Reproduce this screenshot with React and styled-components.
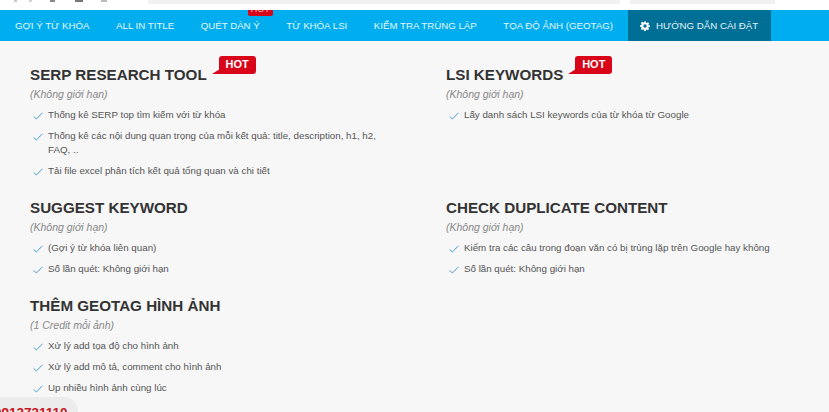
import styled, { createGlobalStyle } from 'styled-components';

const GlobalStyle = createGlobalStyle`
  html, body {
    margin: 0;
    height: 412px;
    overflow: hidden;
    background: #f7f7f7;
    font-family: "Liberation Sans", Arial, sans-serif;
  }
`;

const navItems = [
  { label: 'GỢI Ý TỪ KHÓA' },
  { label: 'ALL IN TITLE' },
  { label: 'QUÉT DÀN Ý', hot: true },
  { label: 'TỪ KHÓA LSI' },
  { label: 'KIỂM TRA TRÙNG LẶP' },
  { label: 'TỌA ĐỘ ẢNH (GEOTAG)' },
];

const stripMarks = [
  { width: 3, gap: 12, color: '#c8c8c8' },
  { width: 3, gap: 18, color: '#d4d4d4' },
  { width: 5, gap: 20, color: '#8a8a8a' },
  { width: 8, gap: 18, color: '#777' },
  { width: 6, gap: 0, color: '#bbb' },
];

const leftColumn = [
  {
    title: 'SERP RESEARCH TOOL',
    hot: true,
    note: '(Không giới hạn)',
    items: [
      'Thống kê SERP top tìm kiếm với từ khóa',
      'Thống kê các nội dung quan trọng của mỗi kết quả: title, description, h1, h2, FAQ, ..',
      'Tải file excel phân tích kết quả tổng quan và chi tiết',
    ],
  },
  {
    title: 'SUGGEST KEYWORD',
    note: '(Không giới hạn)',
    items: ['(Gợi ý từ khóa liên quan)', 'Số lần quét: Không giới hạn'],
  },
  {
    title: 'THÊM GEOTAG HÌNH ẢNH',
    note: '(1 Credit mỗi ảnh)',
    items: ['Xử lý add tọa độ cho hình ảnh', 'Xử lý add mô tả, comment cho hình ảnh', 'Up nhiều hình ảnh cùng lúc'],
  },
];

const rightColumn = [
  {
    title: 'LSI KEYWORDS',
    hot: true,
    note: '(Không giới hạn)',
    items: ['Lấy danh sách LSI keywords của từ khóa từ Google'],
    minHeight: 112,
  },
  {
    title: 'CHECK DUPLICATE CONTENT',
    note: '(Không giới hạn)',
    items: ['Kiểm tra các câu trong đoạn văn có bị trùng lặp trên Google hay không', 'Số lần quét: Không giới hạn'],
  },
];

const CheckIcon = () => (
  <CheckSvg viewBox="0 0 10 8" aria-hidden="true">
    <path d="M0.6 4.4 L3.4 7 L9.4 0.8" fill="none" stroke="#4a9fd4" strokeWidth="1" />
  </CheckSvg>
);

const GearIcon = () => (
  <GearSvg viewBox="0 0 24 24" aria-hidden="true">
    <path
      fillRule="evenodd"
      fill="#fff"
      d="M10 1h4l.6 3.2 1.9.8 2.7-1.8 2.8 2.8-1.8 2.7.8 1.9L24 10v4l-3.2.6-.8 1.9 1.8 2.7-2.8 2.8-2.7-1.8-1.9.8L14 24h-4l-.6-3.2-1.9-.8-2.7 1.8-2.8-2.8 1.8-2.7-.8-1.9L0 14v-4l3.2-.6.8-1.9-1.8-2.7 2.8-2.8 2.7 1.8 1.9-.8zM12 8a4 4 0 1 0 0 8 4 4 0 0 0 0-8z"
    />
  </GearSvg>
);

const Block = ({ title, hot, note, items, minHeight }) => (
  <StyledBlock $minHeight={minHeight}>
    <TitleRow>
      <Title>{title}</Title>
      {hot && <HotTag>HOT</HotTag>}
    </TitleRow>
    <Note>{note}</Note>
    <List>
      {items.map((item) => (
        <Item key={item}>
          <CheckIcon />
          <span>{item}</span>
        </Item>
      ))}
    </List>
  </StyledBlock>
);

const App = () => (
  <>
    <GlobalStyle />
    <Page>
      <BrowserStrip>
        <StripMarks>
          {stripMarks.map((mark, i) => (
            <StripMark key={i} $width={mark.width} $gap={mark.gap} $color={mark.color} />
          ))}
        </StripMarks>
        <StripField $width={472} />
        <StripField $width={145} />
      </BrowserStrip>
      <Nav>
        {navItems.map((item) => (
          <NavItem key={item.label}>
            {item.hot && <NavHot>HOT</NavHot>}
            {item.label}
          </NavItem>
        ))}
        <GuideItem>
          <GearIcon />
          HƯỚNG DẪN CÀI ĐẶT
        </GuideItem>
      </Nav>
      <Content>
        <Column>
          {leftColumn.map((block) => (
            <Block key={block.title} {...block} />
          ))}
        </Column>
        <Column>
          {rightColumn.map((block) => (
            <Block key={block.title} {...block} />
          ))}
        </Column>
      </Content>
      <PhonePill>0912731110</PhonePill>
    </Page>
  </>
);

export default App;

const Page = styled.div`
  position: relative;
  width: 829px;
  height: 412px;
  overflow: hidden;
`;

const BrowserStrip = styled.div`
  height: 10px;
  background: #fff;
  display: flex;
  align-items: flex-start;
  gap: 10px;
`;

const StripMarks = styled.div`
  width: 124px;
  padding-left: 14px;
  display: flex;
  align-items: flex-start;
`;

const StripMark = styled.span`
  width: ${(p) => p.$width}px;
  height: 2px;
  margin-right: ${(p) => p.$gap}px;
  background: ${(p) => p.$color};
`;

const StripField = styled.div`
  width: ${(p) => p.$width}px;
  height: 4px;
  background: #f1f1f1;
`;

const Nav = styled.nav`
  height: 31px;
  background: #00aeef;
  display: flex;
  align-items: stretch;
  padding-left: 2px;
  overflow: hidden;
`;

const NavItem = styled.div`
  position: relative;
  display: flex;
  align-items: center;
  padding: 0 13.5px 0 13px;
  color: #e4f6fd;
  font-size: 9.7px;
  white-space: nowrap;
`;

const NavHot = styled.span`
  position: absolute;
  top: -5px;
  left: 60px;
  width: 25px;
  height: 11px;
  border-radius: 0 0 2px 2px;
  background: #d9061a;
  color: #f3b9be;
  font-size: 9px;
  line-height: 9px;
  text-align: center;
`;

const GuideItem = styled(NavItem)`
  margin-left: auto;
  margin-right: 58px;
  width: 143px;
  box-sizing: border-box;
  padding: 0 0 0 12px;
  gap: 6px;
  background: #006f96;
`;

const GearSvg = styled.svg`
  width: 10px;
  height: 10px;
`;

const Content = styled.main`
  display: grid;
  grid-template-columns: 416px 1fr;
  padding: 25px 30px 0;
`;

const Column = styled.div`
  display: flex;
  flex-direction: column;
`;

const StyledBlock = styled.section`
  min-height: ${(p) => p.$minHeight || 0}px;
  margin-bottom: 21px;
  box-sizing: border-box;
`;

const TitleRow = styled.div`
  position: relative;
  display: flex;
  height: 16px;
  align-items: center;
`;

const Title = styled.h3`
  margin: 0;
  color: #333;
  font-size: 15.2px;
  font-weight: 700;
  white-space: nowrap;
`;

const HotTag = styled.span`
  position: relative;
  top: -9px;
  margin-left: 12px;
  width: 37px;
  height: 18px;
  border-radius: 3px 3px 3px 0;
  background: #d9061a;
  color: #fff;
  font-size: 11px;
  font-weight: 700;
  line-height: 17px;
  text-align: center;

  &::before {
    content: '';
    position: absolute;
    left: -7px;
    bottom: 0;
    border-style: solid;
    border-width: 0 0 5px 8px;
    border-color: transparent transparent #d9061a transparent;
  }
`;

const Note = styled.div`
  margin-top: 6px;
  color: #888;
  font-size: 10.5px;
  font-style: italic;
  line-height: 12px;
`;

const List = styled.ul`
  margin: 8px 0 0;
  padding: 0;
  list-style: none;
  display: flex;
  flex-direction: column;
  gap: 7px;
`;

const Item = styled.li`
  display: grid;
  grid-template-columns: 18px 1fr;
  width: 360px;
  color: #555;
  font-size: 9.75px;
  line-height: 14px;
`;

const CheckSvg = styled.svg`
  width: 10px;
  height: 8px;
  margin: 4px 0 0 3px;
`;

const PhonePill = styled.div`
  position: absolute;
  left: -20px;
  top: 397px;
  width: 98px;
  height: 30px;
  box-sizing: border-box;
  padding: 9px 0 0 14px;
  border-radius: 14px;
  background: #ececec;
  color: #c8161d;
  font-size: 13.5px;
  font-weight: 700;
  line-height: 14px;
`;
